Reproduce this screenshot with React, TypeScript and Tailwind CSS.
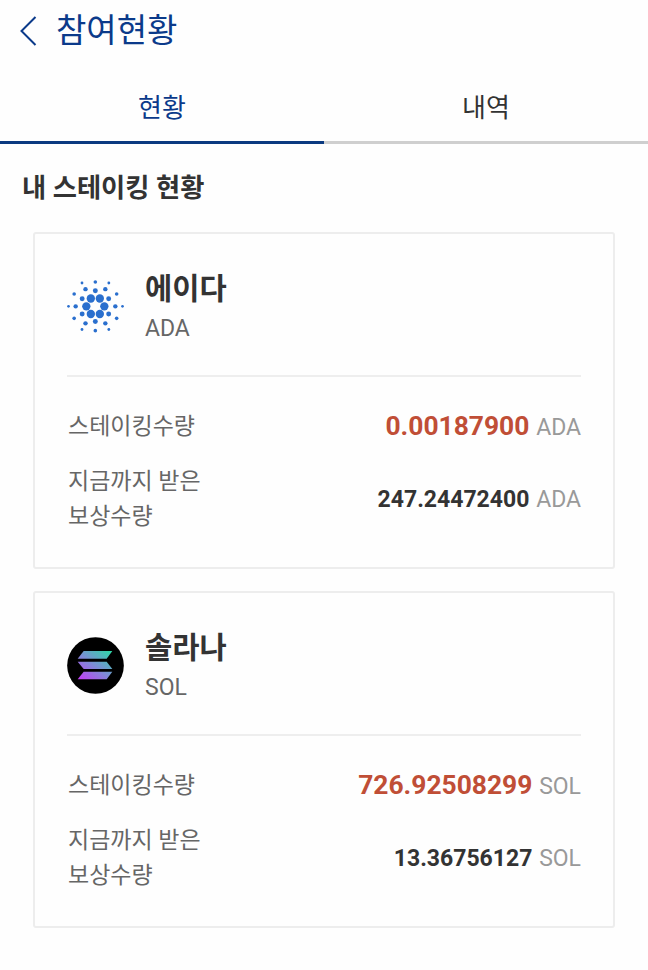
import type { ReactNode } from "react";
import { useState } from "react";

type Coin = {
  symbol: string;
  name: string;
  staked: string;
  reward: string;
  icon: ReactNode;
};

const ADA_DOTS = [
  // inner ring
  [94, 124, 12.5], [148, 124, 12.5], [107.5, 100.5, 12.5], [134.5, 100.5, 12.5], [107.5, 147, 12.5], [134.5, 147, 12.5],
  // second ring
  [121, 77.5, 7.4], [121, 169.5, 7.4], [81.5, 101, 7.4], [161, 101, 7.4], [81.5, 147, 7.4], [161, 147, 7.4],
  // third ring
  [62, 124, 6.6], [181, 124, 6.6], [91.5, 72.5, 6.6], [151, 72.5, 6.6], [91.5, 175, 6.6], [151, 175, 6.6],
  // fourth ring
  [121, 51, 5.4], [121, 197, 5.4], [57.5, 87, 5.4], [185, 87, 5.4], [57.5, 160, 5.4], [185, 160, 5.4],
  // outer ring
  [40.5, 124, 4], [202.5, 124, 4], [81, 54, 4.2], [161.5, 54, 4.2], [81, 193.5, 4.2], [161.5, 193.5, 4.2],
];

function AdaIcon() {
  return (
    <svg className="size-[57px]" viewBox="36 39 171 171" fill="#2a6fce">
      {ADA_DOTS.map(([cx, cy, r]) => (
        <circle key={`${cx}-${cy}`} cx={cx} cy={cy} r={r} />
      ))}
    </svg>
  );
}

function SolIcon() {
  return (
    <svg className="size-[57px]" viewBox="36 35 171 171">
      <defs>
        <linearGradient id="sol" gradientUnits="userSpaceOnUse" x1="84" y1="168" x2="156" y2="70">
          <stop offset="0" stopColor="#c040f5" />
          <stop offset="0.5" stopColor="#7a8fd4" />
          <stop offset="1" stopColor="#2fd6a8" />
        </linearGradient>
      </defs>
      <circle cx="121.5" cy="120.5" r="85" fill="#000" />
      <g fill="url(#sol)">
        <path d="M86 77h86l-17 23H68z" />
        <path d="M68 109h87l17 22H86z" />
        <path d="M86 139h86l-17 23H68z" />
      </g>
    </svg>
  );
}

const coins: Coin[] = [
  { symbol: "ADA", name: "에이다", staked: "0.00187900", reward: "247.24472400", icon: <AdaIcon /> },
  { symbol: "SOL", name: "솔라나", staked: "726.92508299", reward: "13.36756127", icon: <SolIcon /> },
];

const tabs = ["현황", "내역"];

function CoinCard({ coin }: { coin: Coin }) {
  return (
    <section className="h-[337px] rounded-[3px] border-2 border-[#ededed] px-[32px] pt-[34px]">
      <div className="flex h-[109px] gap-[21px] border-b-2 border-[#eeeeee]">
        <div className="pt-[10px]">{coin.icon}</div>
        <div className="pt-px">
          <h3 className="text-[29.6px] leading-[40px] font-bold text-[#333]">{coin.name}</h3>
          <p className="text-[23px] leading-[40px] text-[#666]">{coin.symbol}</p>
        </div>
      </div>

      <dl className="pt-[31px] text-[23px] leading-[35px]">
        <div className="flex h-[37px] items-center justify-between">
          <dt className="pl-px text-[#666]">스테이킹수량</dt>
          <dd className="pt-px text-[#999] [word-spacing:1px]">
            <strong className="text-[26.4px] font-bold text-[#c04e36]">{coin.staked}</strong> {coin.symbol}
          </dd>
        </div>
        <div className="mt-[19px] flex items-center justify-between">
          <dt className="pl-px text-[#666]">
            지금까지 받은
            <br />
            보상수량
          </dt>
          <dd className="text-[#999] [word-spacing:1px]">
            <strong className="font-bold text-[#333]">{coin.reward}</strong> {coin.symbol}
          </dd>
        </div>
      </dl>
    </section>
  );
}

export default function App() {
  const [tab, setTab] = useState(0);

  return (
    <div className="min-h-screen bg-[#fefefe] font-[Roboto,'Noto_Sans_CJK_KR',sans-serif]">
      {/* Header */}
      <header className="flex h-[62px] items-center pl-[20px]">
        <button aria-label="뒤로">
          <svg className="h-[30px] w-[17px]" viewBox="0 0 17 30" fill="none" stroke="#0b3a8a" strokeWidth="2">
            <path d="M15.5 1 1.5 15l14 14" />
          </svg>
        </button>
        <h1 className="ml-[19px] text-[33px] leading-[48px] text-[#0b3a8a]">참여현황</h1>
      </header>

      {/* Tabs */}
      <nav className="flex h-[82px]">
        {tabs.map((label, i) => (
          <button
            key={label}
            onClick={() => setTab(i)}
            className={
              tab === i
                ? "flex-1 border-b-3 border-[#0b3a80] pt-[13px] text-[26px] text-[#0b3a8a]"
                : "flex-1 border-b-3 border-[#cfcfcf] pt-[13px] text-[26px] text-[#333]"
            }
          >
            {label}
          </button>
        ))}
      </nav>

      {/* Content */}
      <main>
        <h2 className="pt-[24px] pl-[22px] text-[26.3px] leading-[40px] font-bold text-[#333]">내 스테이킹 현황</h2>
        <div className="mt-[24px] flex flex-col gap-[22px] px-[33px]">
          {coins.map(coin => (
            <CoinCard key={coin.symbol} coin={coin} />
          ))}
        </div>
      </main>
    </div>
  );
}
